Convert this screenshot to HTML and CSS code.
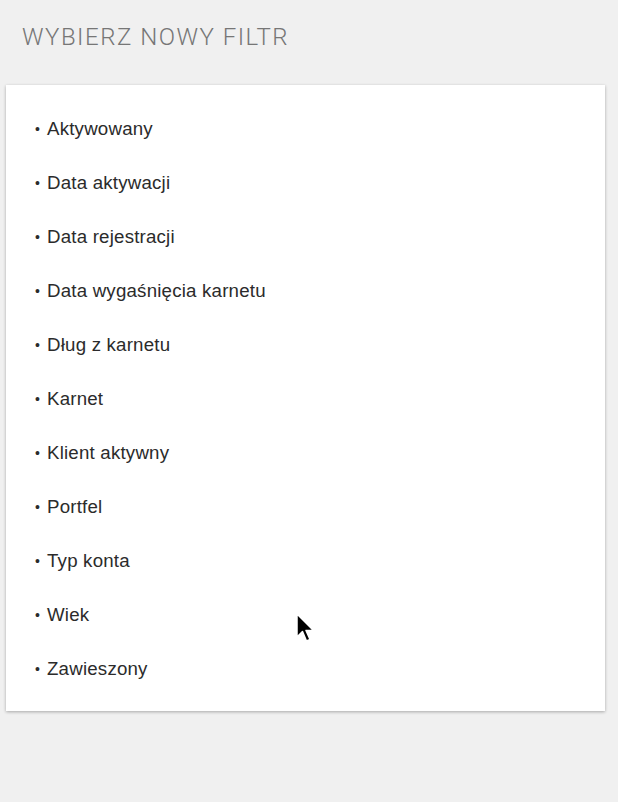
FILE: index.html
```html
<!DOCTYPE html>
<html lang="pl">
<head>
<meta charset="utf-8">
<link rel="stylesheet" href="styles.css">
</head>
<body>
<div class="page">
  <h1 class="title">WYBIERZ NOWY FILTR</h1>
  <div class="card">
    <ul class="list">
      <li class="item">Aktywowany</li>
      <li class="item">Data aktywacji</li>
      <li class="item">Data rejestracji</li>
      <li class="item">Data wygaśnięcia karnetu</li>
      <li class="item">Dług z karnetu</li>
      <li class="item">Karnet</li>
      <li class="item">Klient aktywny</li>
      <li class="item">Portfel</li>
      <li class="item">Typ konta</li>
      <li class="item">Wiek</li>
      <li class="item">Zawieszony</li>
    </ul>
  </div>
</div>
<svg class="cursor" width="22" height="32" viewBox="0 0 22 32">
  <path d="M1 1 L1 24 L6.5 18.5 L10.5 28 L14 26.5 L10 17.5 L17.5 17.5 Z" fill="#000" stroke="#fff" stroke-width="1.5" stroke-linejoin="round"/>
</svg>
</body>
</html>
```
FILE: styles.css
```css
html, body {
  margin: 0;
  padding: 0;
  background: #f0f0f0;
}
body {
  width: 618px;
  height: 802px;
  overflow: hidden;
  position: relative;
  font-family: "Liberation Sans", Arial, sans-serif;
}
.page {
  padding: 0 13px 0 6px;
}
.title {
  margin: 0;
  height: 85px;
  box-sizing: border-box;
  padding: 23px 0 0 16px;
  font-family: Roboto, "Liberation Sans", sans-serif;
  font-weight: 300;
  font-size: 24px;
  line-height: 28px;
  color: #767676;
  letter-spacing: 1.5px;
}
.card {
  background: #fff;
  box-shadow: 0 1px 3px rgba(0,0,0,0.3);
  padding: 16px 0;
}
.list {
  list-style: none;
  margin: 0;
  padding: 0 0 0 28px;
}
.item {
  height: 54px;
  line-height: 54px;
  font-size: 18.7px;
  letter-spacing: 0.2px;
  color: #2b2b2b;
  padding-top: 1px;
  box-sizing: border-box;
}
.item::before {
  content: "•";
  display: inline-block;
  width: 13px;
  font-size: 14px;
  vertical-align: top;
  padding-left: 1px;
  box-sizing: border-box;
}
.cursor {
  position: absolute;
  left: 296px;
  top: 613px;
}
```
